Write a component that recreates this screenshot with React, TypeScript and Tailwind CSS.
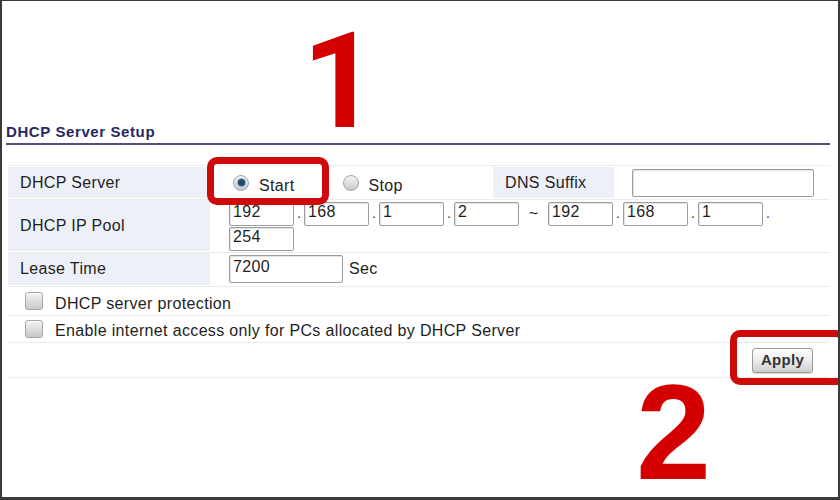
import React from "react";

const font = { fontFamily: '"Liberation Sans", Arial, sans-serif' };

function IpBox({ v, w = "w-[65px]", h = "h-[24px]" }: { v: string; w?: string; h?: string }) {
  return (
    <div
      className={`${w} ${h} border border-[#9d9d9d] rounded-[2px] bg-white shadow-[inset_1px_1px_1px_rgba(0,0,0,0.12)] flex items-center pb-[5px] pl-[3px] text-[16px] text-[#1e1e1e] leading-none`}
    >
      {v}
    </div>
  );
}

function Dot() {
  return <div className="w-[10px] flex items-end justify-center pb-[2px] text-[14px] text-[#333] self-stretch">.</div>;
}

function Checkbox() {
  return (
    <div className="w-[18px] h-[18px] rounded-[3px] border border-[#a6a6a6] bg-linear-to-b from-[#f3f3f3] to-[#c9c9c9] shadow-[inset_0_1px_0_rgba(255,255,255,0.8)]" />
  );
}

function Radio({ checked }: { checked?: boolean }) {
  return (
    <div className="w-[16px] h-[16px] rounded-full border border-[#9aa3ad] bg-linear-to-b from-[#f6f6f6] to-[#c6c9cd] flex items-center justify-center">
      {checked && <div className="w-[7px] h-[7px] rounded-full bg-[#1f4a72] shadow-[0_0_1px_1px_rgba(90,140,190,0.6)]" />}
    </div>
  );
}

export default function App() {
  return (
    <div
      className="relative w-[840px] h-[500px] overflow-hidden bg-white border-l-2 border-r-2 border-t border-b-[3px] border-[#3a3a3a] tracking-[0.35px] text-[#1e1e1e]"
      style={font}
    >
      {/* Title */}
      <div className="pt-[122px] pl-[4px] pr-[8px]">
        <div className="text-[15px] font-bold leading-[18px] text-[#28285e] tracking-[0.6px]">DHCP Server Setup</div>
        <div className="mt-[2px] h-[2px] bg-[#544e7c]" />
      </div>

      {/* Table */}
      <div className="mt-[20px] ml-[6px] mr-[8px] border-t border-[#ededed] pt-[1px] text-[16px]">
        {/* Row 1 */}
        <div className="flex h-[33px] border-b border-[#ebebeb] pb-[1px]">
          <div className="w-[202px] bg-[#eef0f8] flex items-center pl-[12px]">DHCP Server</div>
          <div className="w-[279px] ml-[2px] flex items-center pl-[21px]">
            <Radio checked />
            <span className="ml-[10px] mt-[7px]">Start</span>
            <div className="ml-[48px]">
              <Radio />
            </div>
            <span className="ml-[10px] mt-[7px]">Stop</span>
          </div>
          <div className="w-[121px] ml-[2px] bg-[#eef0f8] flex items-center pl-[12px]">DNS Suffix</div>
          <div className="ml-[18px] flex items-center">
            <IpBox v="" w="w-[182px]" h="h-[28px]" />
          </div>
        </div>

        {/* Row 2 */}
        <div className="flex h-[53px] border-b border-[#ebebeb] pb-[1px]">
          <div className="w-[202px] bg-[#eef0f8] flex items-center pl-[12px]">DHCP IP Pool</div>
          <div className="ml-[2px] pl-[17px] pt-[2px] flex flex-col gap-[1px]">
            <div className="flex">
              <IpBox v="192" />
              <Dot />
              <IpBox v="168" />
              <Dot />
              <IpBox v="1" />
              <Dot />
              <IpBox v="2" />
              <div className="w-[29px] flex items-center justify-center text-[16px]">~</div>
              <IpBox v="192" />
              <Dot />
              <IpBox v="168" />
              <Dot />
              <IpBox v="1" />
              <Dot />
            </div>
            <IpBox v="254" />
          </div>
        </div>

        {/* Row 3 */}
        <div className="flex h-[34px] border-b border-[#ebebeb] pb-[1px]">
          <div className="w-[202px] bg-[#eef0f8] flex items-center pl-[12px]">Lease Time</div>
          <div className="ml-[2px] pl-[17px] flex items-center">
            <IpBox v="7200" w="w-[114px]" h="h-[28px]" />
            <span className="ml-[6px]">Sec</span>
          </div>
        </div>

        {/* Checkbox rows */}
        <div className="flex items-center h-[29px] border-b border-[#ebebeb] pl-[17px]">
          <Checkbox />
          <span className="ml-[12px] mt-[5px]">DHCP server protection</span>
        </div>
        <div className="flex items-center h-[27px] border-b border-[#ebebeb] pl-[17px]">
          <Checkbox />
          <span className="ml-[12px] mt-[4px]">Enable internet access only for PCs allocated by DHCP Server</span>
        </div>

        {/* Apply row */}
        <div className="flex items-center justify-end h-[35px] border-b border-[#ebebeb] pr-[17px]">
          <button className="w-[61px] h-[25px] rounded-[3px] border border-[#9a9a9a] bg-linear-to-b from-[#fdfdfd] via-[#ececec] to-[#cfcfcf] text-[15px] font-bold text-[#333] tracking-[0.3px] shadow-[0_1px_1px_rgba(0,0,0,0.15)]">
            Apply
          </button>
        </div>
      </div>

      {/* Annotations */}
      <div
        className="absolute left-[300px] top-[28px] text-[133px] font-bold leading-[0.8] text-[#d40000] tracking-normal"
        style={{ fontFamily: 'Roboto, "Noto Sans", sans-serif' }}
      >
        1
      </div>
      <div className="absolute left-[634px] top-[383px] text-[135px] font-bold leading-[0.72] text-[#d40000] tracking-normal">2</div>
      <div className="absolute left-[205px] top-[156px] w-[122px] h-[48px] border-[7px] border-[#cf0a0a] rounded-[10px]" />
      <div className="absolute left-[728px] top-[329px] w-[116px] h-[55px] border-[7px] border-[#cf0a0a] rounded-[10px]" />
    </div>
  );
}
